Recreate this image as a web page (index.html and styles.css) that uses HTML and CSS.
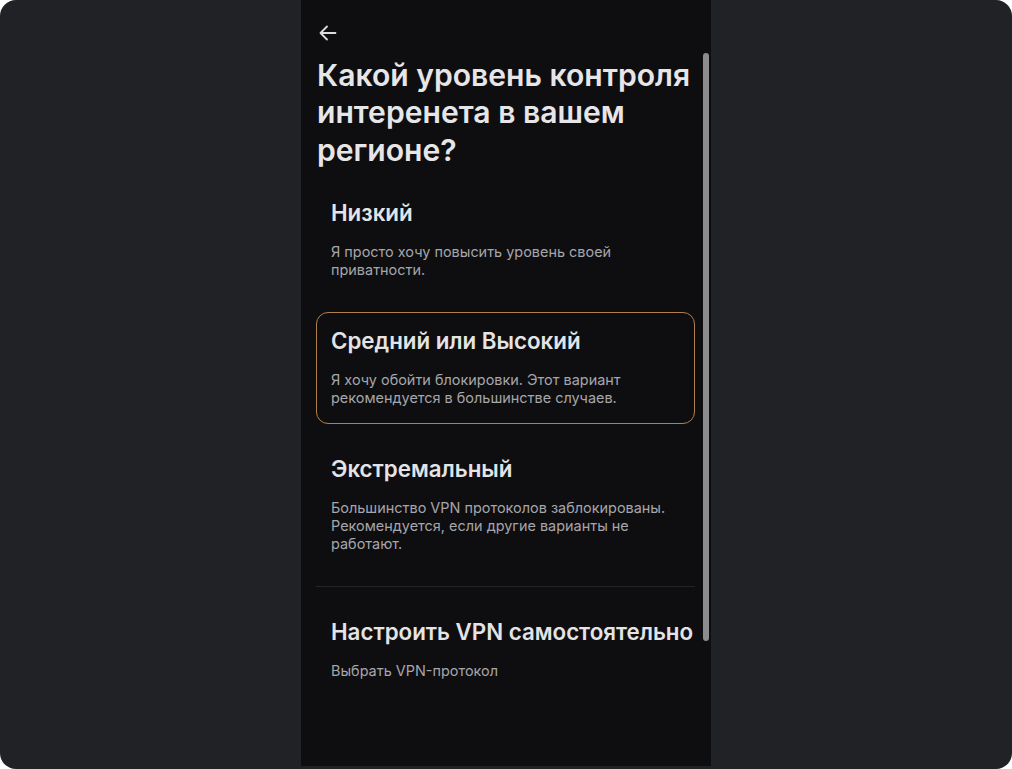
FILE: index.html
```html
<!DOCTYPE html>
<html lang="ru">
<head>
<meta charset="utf-8">
<link rel="stylesheet" href="styles.css">
</head>
<body>
<div class="frame">
  <div class="panel">
    <div class="header">
      <svg class="back" width="24" height="24" viewBox="0 0 24 24" fill="none" stroke="#dcdcdf" stroke-width="1.8" stroke-linecap="round" stroke-linejoin="round"><path d="M19.5 12H4.5M11 5.5L4.5 12L11 18.5"/></svg>
      <h1 class="title">Какой уровень контроля интеренета в вашем регионе?</h1>
    </div>
    <div class="options">
      <div class="option">
        <div class="opt-title">Низкий</div>
        <div class="opt-desc">Я просто хочу повысить уровень своей приватности.</div>
      </div>
      <div class="option selected">
        <div class="opt-title">Средний или Высокий</div>
        <div class="opt-desc">Я хочу обойти блокировки. Этот вариант рекомендуется в большинстве случаев.</div>
      </div>
      <div class="option">
        <div class="opt-title">Экстремальный</div>
        <div class="opt-desc">Большинство VPN протоколов заблокированы. Рекомендуется, если другие варианты не работают.</div>
      </div>
      <div class="divider"></div>
      <div class="option">
        <div class="opt-title">Настроить VPN самостоятельно</div>
        <div class="opt-desc">Выбрать VPN-протокол</div>
      </div>
    </div>
    <div class="scrollbar"></div>
  </div>
</div>
</body>
</html>
```

FILE: styles.css
```css
html, body {
  margin: 0;
  padding: 0;
  background: #ffffff;
}
body {
  font-family: Inter, "Noto Sans", sans-serif;
}
.frame {
  width: 1012px;
  height: 769px;
  background: #212226;
  border-radius: 16px;
  display: flex;
  justify-content: center;
  overflow: hidden;
}
.panel {
  position: relative;
  width: 410px;
  height: 766px;
  background: #0e0e10;
  box-sizing: border-box;
  padding: 0 16px 0 15px;
}
.header {
  padding-top: 21px;
}
.back {
  display: block;
}
.title {
  margin: 11.5px 0 0 1px;
  font-size: 30.1px;
  line-height: 37.5px;
  font-weight: 600;
  color: #e6e6e9;
}
.options {
  margin-top: 15px;
  display: flex;
  flex-direction: column;
  gap: 16px;
}
.option {
  border: 1px solid transparent;
  border-radius: 12px;
  padding: 16px 14px;
}
.option.selected {
  border-color: #b0804c;
}
.opt-title {
  font-size: 22.3px;
  line-height: 24px;
  font-weight: 600;
  color: #e4e4e7;
  white-space: nowrap;
}
.opt-desc {
  margin-top: 18px;
  font-size: 14.45px;
  line-height: 18px;
  color: #a6a6ab;
}
.divider {
  height: 1px;
  background: #242428;
}
.scrollbar {
  position: absolute;
  left: 402px;
  top: 53px;
  width: 6px;
  height: 588px;
  border-radius: 3px;
  background: #8c8c8e;
}
```
